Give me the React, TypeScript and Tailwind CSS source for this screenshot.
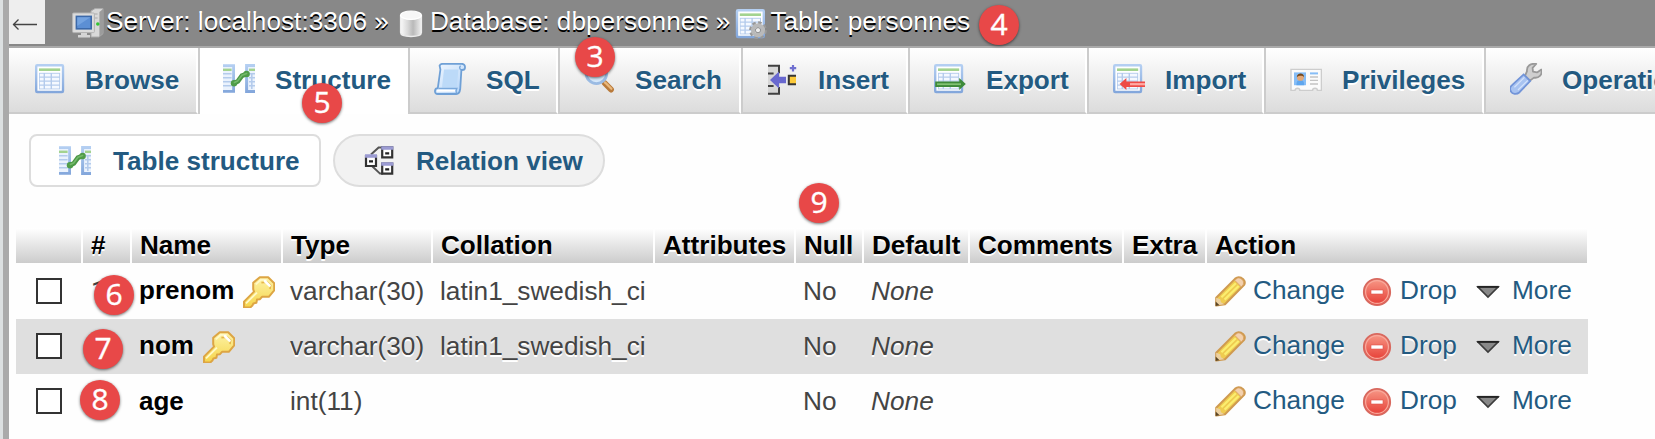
import type { ReactNode } from "react";

type IconProps = { className?: string };

function Svg({ className = "", children }: { className?: string; children: ReactNode }) {
  return (
    <svg viewBox="0 0 16 16" className={`size-8 shrink-0 ${className}`} fill="none">
      {children}
    </svg>
  );
}

function Defs() {
  return (
    <svg className="absolute size-0" aria-hidden="true">
      <defs>
        <linearGradient id="key" x1="0" y1="0" x2="0" y2="1">
          <stop offset="0" stopColor="#fdf3a8" />
          <stop offset="1" stopColor="#f6d54a" />
        </linearGradient>
        <linearGradient id="red" x1="0" y1="0" x2="0" y2="1">
          <stop offset="0" stopColor="#f79a88" />
          <stop offset="1" stopColor="#e63c34" />
        </linearGradient>
        <linearGradient id="cyl" x1="0" y1="0" x2="1" y2="0">
          <stop offset="0" stopColor="#fafafa" />
          <stop offset="0.35" stopColor="#d8d8d8" />
          <stop offset="0.6" stopColor="#b9b9b9" />
          <stop offset="1" stopColor="#f0f0f0" />
        </linearGradient>
        <linearGradient id="scroll" x1="0" y1="0" x2="1" y2="1">
          <stop offset="0" stopColor="#f2f8ff" />
          <stop offset="1" stopColor="#b2d3f7" />
        </linearGradient>
        <linearGradient id="frame" gradientUnits="userSpaceOnUse" x1="0" y1="1" x2="0" y2="15">
          <stop offset="0" stopColor="#b4cff2" />
          <stop offset="1" stopColor="#82a6db" />
        </linearGradient>
      </defs>
    </svg>
  );
}

function Sheet() {
  return (
    <>
      <rect x="1.6" y="1.100" width="13.400" height="13.400" rx="0.5" fill="#fff" stroke="url(#frame)" strokeWidth="1.200" />
      <rect x="3" y="2.700" width="10.600" height="1.300" fill="#a3d38f" />
      <rect x="3" y="4.900" width="10.600" height="8.300" fill="#b4cbec" />
      <path d="M3.400 5.400h1.900v1.300H3.400zM6 5.400h2.800v1.300H6zM9.500 5.400h3.600v1.300H9.500zM3.400 7.400h1.900v1.300H3.400zM6 7.400h2.800v1.300H6zM9.500 7.400h3.600v1.300H9.500zM3.400 9.400h1.900v1.300H3.400zM6 9.400h2.800v1.300H6zM9.500 9.400h3.600v1.300H9.500zM3.400 11.400h1.900v1.300H3.400zM6 11.400h2.800v1.300H6zM9.500 11.400h3.600v1.300H9.500z" fill="#f5f9ff" />
    </>
  );
}

function BrowseIcon({ className }: IconProps) {
  return <Svg className={className}><Sheet /></Svg>;
}

function StructureIcon({ className }: IconProps) {
  return (
    <Svg className={className}>
      <path d="M0 .8h5.600v13.800H0z" fill="#eaf2fd" />
      <path d="M0 1.300h5.300v12.900H0" stroke="url(#frame)" strokeWidth="1.400" />
      <path d="M0 3.400h4.300" stroke="#a3d38f" strokeWidth="1.200" />
      <path d="M0 5.400h4.300M0 7.400h4.300M0 9.400h4.300M0 11.400h4.300" stroke="#b4cbec" strokeWidth="0.800" />
      <path d="M16 .8h-4.600v13.800H16z" fill="#eaf2fd" />
      <path d="M16 1.300h-4.200v12.900H16" stroke="url(#frame)" strokeWidth="1.500" />
      <path d="M13 3.400h3" stroke="#a3d38f" strokeWidth="1.200" />
      <path d="M13 5.400h3M13 7.400h3M13 9.400h3M13 11.400h3M14.400 5v8" stroke="#b4cbec" strokeWidth="0.800" />
      <path d="M5.600 10.100 7.400 9.200 9.400 6.400 11.500 5.600" stroke="#4b9646" strokeWidth="2.400" strokeLinecap="round" strokeLinejoin="round" />
      <circle cx="5.500" cy="10.100" r="1.600" fill="#4f9c49" />
      <circle cx="11.800" cy="5.500" r="1.600" fill="#4f9c49" />
      <path d="M5.700 9.700 7.300 9 9.500 6.100 11.800 5.300" stroke="#73b96a" strokeWidth="0.800" strokeLinecap="round" />
    </Svg>
  );
}

function ScrollIcon({ className }: IconProps) {
  return (
    <Svg className={className}>
      <path d="M2.800 1.300c.3-.7.9-.9 1.600-.9h9.400c1.200 0 1.800.8 1.700 1.800 0 1-.7 1.300-1.500 1.300h-.3l-.6 9.600c-.2 1.600-.8 2.400-2 2.400H1.900C.9 15.500.4 14.800.5 13.900c.1-.9.700-1.300 1.400-1.300l1.300-9.300z" fill="url(#scroll)" stroke="#6fa0d6" strokeWidth="0.900" />
      <path d="M5 3.300 4 12.300h7.400l.8-9z" fill="#bcdaf8" />
      <path d="M2.400 12.700h9c-.5.800-.4 1.700-.2 2.500M13.500 3.400c-.9-.5-.8-1.500-.2-2" stroke="#7aa9dc" strokeWidth="0.700" />
      <path d="M1.500 13.900h9" stroke="#fff" strokeWidth="0.900" />
    </Svg>
  );
}

function SearchIcon({ className }: IconProps) {
  return (
    <Svg className={className}>
      <path d="m10.800 10 3.200 3.300" stroke="#b97a3a" strokeWidth="2.900" strokeLinecap="round" />
      <path d="m11 9.700 3.200 3.200" stroke="#e9b87c" strokeWidth="1.100" strokeLinecap="round" />
      <circle cx="6.700" cy="5.200" r="5.100" fill="#d7e9fb" stroke="#9bbbe3" strokeWidth="1.400" />
    </Svg>
  );
}

function InsertIcon({ className }: IconProps) {
  return (
    <Svg className={className}>
      <path d="M1 1h6v14.500H1z" fill="#cfcfcf" opacity=".75" />
      <path d="M1 1.400h5.500v3.700M1 5.300h2.800M1 11.500h2.800M6.500 12v3.400H1" stroke="#404040" strokeWidth="1" />
      <path d="M2 8.500 6.500 4.200v2.700H10v3.200H6.500v2.700z" fill="#6868cf" />
      <path d="M13.500 1v3.200M11.900 2.600h3.200" stroke="#7070d0" strokeWidth="1.100" />
      <path d="M15 6.400h-3.600v4.200H15" stroke="#353535" strokeWidth="1" fill="#fcca3a" />
    </Svg>
  );
}

function ExportIcon({ className }: IconProps) {
  return (
    <Svg className={className}>
      <g transform="translate(-1 0)"><Sheet /></g>
      <path d="M.6 9.200h12V7.500l3.300 3-3.300 3V12H.6z" fill="#3e8a3a" />
      <path d="M1.500 10.600h12" stroke="#82c274" strokeWidth="0.900" />
    </Svg>
  );
}

function ImportIcon({ className }: IconProps) {
  return (
    <Svg className={className}>
      <g transform="translate(-1 0)"><Sheet /></g>
      <path d="M16 9.200H6.700V7.500l-3.400 3 3.400 3V12H16z" fill="#ee4a46" />
      <path d="M8.500 10.600H16" stroke="#ffaaa4" strokeWidth="1.100" />
    </Svg>
  );
}

function PrivilegesIcon({ className }: IconProps) {
  return (
    <Svg className={className}>
      <path d="M.5 3.200h15.200v10.500h-2c0-1.400-2.400-1.400-2.400 0H4.900c0-1.400-2.400-1.400-2.400 0h-2z" fill="#fbfbfb" stroke="#cdcdcd" strokeWidth="0.700" />
      <rect x="2" y="4.700" width="6" height="6.400" fill="#86bdf6" />
      <path d="M3.200 11.100c0-2.300 1-2.600 1.900-2.600s2 .3 2 2.600z" fill="#5fa6ee" />
      <circle cx="5.200" cy="7.200" r="1.700" fill="#e3a878" />
      <path d="M3.400 7.100c0-2.400 3.800-2.400 3.600 0-.6-.8-2.300-1-3.600 0z" fill="#74491f" />
      <path d="M10 5.200h4" stroke="#86bdf6" strokeWidth="1" />
      <path d="M10 7h4M10 8.700h4M10 10.500h4" stroke="#c4c4c4" strokeWidth="0.700" />
    </Svg>
  );
}

function WrenchIcon({ className }: IconProps) {
  return (
    <Svg className={className}>
      <path d="M13.100.5c-2.800-.5-4.900 1-4.600 3.600L7.500 6.400l2.500 2.400 2-1.500c2.400.4 4.300-1.300 3.700-4L13.500 4.700l-2-.4-.2-1.900z" fill="#cfcfcf" stroke="#999" strokeWidth="0.900" strokeLinejoin="round" />
      <path d="M6.800 5.700 10.100 9 4.800 14.600c-1.600 1.400-3.700.9-4.300-.3-.7-1.100-.4-2.400.4-3.100z" fill="#a8c3f1" stroke="#7294d8" strokeWidth="0.900" />
      <path d="M2.200 12.100 7.200 7.200M4 13.500 8.900 8.700" stroke="#d4e2fb" strokeWidth="0.600" />
    </Svg>
  );
}

function RelationIcon({ className }: IconProps) {
  return (
    <Svg className={className}>
      <path d="M4 4.800 7.800 1.200h2M4.500 10.500l4 3.800H10" stroke="#555" strokeWidth="1" />
      <path d="M1.500 5.500h5v5h-5zM9.600 1.200h5v5h-5zM9.600 9.300h5v5h-5z" fill="#fff" stroke="#333" strokeWidth="1.100" />
      <path d="M1 4.600h6v1.800H1zM9.100.6h6.100v1.800H9.100zM9.100 8.600h6.100v1.800H9.100z" fill="#9b9bd2" />
      <path d="M3 8.200h2M11.100 4.200h2M11.100 12.200h2" stroke="#222" strokeWidth="1.200" />
    </Svg>
  );
}

function ServerIcon({ className }: IconProps) {
  return (
    <Svg className={className}>
      <path d="m9.500 1.500 2-1.200h4v12.500l-2 1.700H9.500z" fill="#d9d9d9" stroke="#aaa" strokeWidth="0.500" />
      <path d="M13.700 2v12.200l1.800-1.500V.5z" fill="#9c9c9c" />
      <path d="M10.300 3h2.500M10.300 5h2.500" stroke="#aaa" strokeWidth="0.600" />
      <rect x=".3" y="2.500" width="10.900" height="9.800" rx=".5" fill="#dcdcdc" stroke="#b5b5b5" strokeWidth="0.500" />
      <rect x="2.200" y="4.200" width="7.400" height="6.200" fill="#5c8fd4" stroke="#3c69a9" strokeWidth="0.800" />
      <path d="M2.600 4.600h6.600L2.600 9z" fill="#84b0e8" opacity=".6" />
      <circle cx="12.900" cy="8" r="0.900" fill="#35c435" />
      <path d="M4.500 12.500h3v1H9v1.300H3v-1.300h1.500z" fill="#d5d5d5" />
    </Svg>
  );
}

function DatabaseIcon({ className }: IconProps) {
  return (
    <Svg className={className}>
      <path d="M2.800 3.800v8.500c0 2.600 10.400 2.600 10.400 0V3.800z" fill="url(#cyl)" stroke="#ededed" strokeWidth="0.700" />
      <ellipse cx="8" cy="3.600" rx="5.200" ry="2.100" fill="#f7f7f7" stroke="#fff" strokeWidth="0.600" />
    </Svg>
  );
}

function TableIcon({ className }: IconProps) {
  return (
    <Svg className={className}>
      <g transform="translate(-.6 0)"><Sheet /></g>
      <circle cx="11.500" cy="11.100" r="3.700" stroke="#999" strokeWidth="1.500" strokeDasharray="1.700 1.200" />
      <circle cx="11.500" cy="11.100" r="2.500" stroke="#b9b9b9" strokeWidth="2" />
      <circle cx="11.500" cy="11.100" r="1.300" fill="#eee" stroke="#888" strokeWidth="0.500" />
    </Svg>
  );
}

function KeyIcon({ className }: IconProps) {
  return (
    <Svg className={className}>
      <path d="M8.400.6h4.200l3 3v3.600l-2.700 3.200H9.500l-1 1.200-1.500.2-.3 1.600-1.500.3-.5 1.100-1 .9H.5v-2.900l5-5-.4-1.200V3.400z" fill="url(#key)" stroke="#dda544" strokeWidth="1" strokeLinejoin="round" />
      <path d="M1.500 13.700 7 8.300M6.400 4.200l2.500-2.300h3" stroke="#fff9c8" strokeWidth="0.900" />
      <path d="m9.200 3.300 3-.2 1.600 1.500-.3 2" stroke="#e6b64c" strokeWidth="0.800" />
      <path d="m11 2.600 2.300 2.200" stroke="#fff" strokeWidth="1.300" strokeLinecap="round" />
    </Svg>
  );
}

function PencilIcon({ className }: IconProps) {
  return (
    <Svg className={className}>
      <path d="M1.100 10.900 10.600 1.300c1-.8 2-.8 3-.4 1.600.8 2.200 2.200 1.500 3.500L5.500 14.100l-4.400.7z" fill="#efcb50" stroke="#cf9a50" strokeWidth="1" strokeLinejoin="round" />
      <path d="M3.700 10.600 10.900 3.600M5.300 11.800 12.300 5" stroke="#fbee70" strokeWidth="1.100" />
      <path d="m10.300 2.100 1.400-1c1.600-.7 3.500 1.200 3 3l-1 1.400z" fill="#f3d1ae" stroke="#d79d62" strokeWidth="0.400" />
      <path d="m1.100 10.900 2 .7.400 1.500 1.700 1-4.100.7z" fill="#ecd0a0" />
      <path d="m.8 12.700 2 1.900-2 .4z" fill="#5b4626" />
    </Svg>
  );
}

function DropIcon({ className }: IconProps) {
  return (
    <Svg className={className}>
      <circle cx="8" cy="8" r="6.600" fill="url(#red)" stroke="#d8695f" strokeWidth="0.900" />
      <circle cx="8" cy="8" r="5.700" stroke="#f8a99c" strokeWidth="0.600" />
      <rect x="5" y="7" width="6" height="2" fill="#fff" stroke="#df5047" strokeWidth="0.300" />
    </Svg>
  );
}

function MoreIcon({ className }: IconProps) {
  return (
    <Svg className={className}>
      <path d="M3 5.500h10L8 10.500z" fill="#888" stroke="#3c3c3c" strokeWidth="0.800" />
      <path d="M2.600 5.400h10.800" stroke="#222" strokeWidth="0.900" />
    </Svg>
  );
}

const tabBase =
  "flex h-[66px] shrink-0 items-start pt-[15px] border-b-2 border-b-[#ccc] border-r-2 border-r-white bg-linear-to-b from-white to-[#dcdcdc]";

const tabs = [
  { label: "Browse", Icon: BrowseIcon, box: `${tabBase} w-[189px] pl-6` },
  {
    label: "Structure",
    Icon: StructureIcon,
    box: "flex h-[66px] w-[210px] shrink-0 items-start border-l-2 border-l-[#ccc] bg-white pl-[23px] pt-[15px]",
  },
  { label: "SQL", Icon: ScrollIcon, box: `${tabBase} w-[150px] border-l-2 border-l-[#ccc] pl-6` },
  { label: "Search", Icon: SearchIcon, box: `${tabBase} w-[183px] border-l-2 border-l-[#ccc] pl-[23px]` },
  { label: "Insert", Icon: InsertIcon, box: `${tabBase} w-[167px] border-l-2 border-l-[#ccc] pl-[23px]` },
  { label: "Export", Icon: ExportIcon, box: `${tabBase} w-[179px] border-l-2 border-l-[#ccc] pl-6` },
  { label: "Import", Icon: ImportIcon, box: `${tabBase} w-[177px] border-l-2 border-l-[#ccc] pl-6` },
  { label: "Privileges", Icon: PrivilegesIcon, box: `${tabBase} w-[220px] border-l-2 border-l-[#ccc] pl-6` },
  { label: "Operations", Icon: WrenchIcon, box: `${tabBase} w-[240px] border-l-2 border-l-[#ccc] pl-6` },
];

const headers = ["", "#", "Name", "Type", "Collation", "Attributes", "Null", "Default", "Comments", "Extra", "Action"];

const columns =
  "grid grid-cols-[65px_47px_149px_148px_220px_139px_66px_104px_152px_81px_380px] gap-x-[2px]";

const rows = [
  { num: "1", name: "prenom", key: true, type: "varchar(30)", collation: "latin1_swedish_ci" },
  { num: "", name: "nom", key: true, type: "varchar(30)", collation: "latin1_swedish_ci" },
  { num: "", name: "age", key: false, type: "int(11)", collation: "" },
];

const badges = [
  { n: 3, place: "left-[575px] top-[37px]" },
  { n: 4, place: "left-[979px] top-[5px]" },
  { n: 5, place: "left-[302px] top-[83px]" },
  { n: 6, place: "left-[94px] top-[275px]" },
  { n: 7, place: "left-[83px] top-[329px]" },
  { n: 8, place: "left-[80px] top-[380px]" },
  { n: 9, place: "left-[799px] top-[183px]" },
];

export default function App() {
  return (
    <div className="relative flex h-[439px] w-[1655px] overflow-hidden bg-[#fefefe] font-['Liberation_Sans',Arial,sans-serif] text-[26.24px] leading-[30px] whitespace-nowrap">
      <Defs />
      <div className="w-[3px] shrink-0 bg-[#dce0e1]" />
      <div className="w-[6px] shrink-0 bg-[#aaa]" />
      <div className="flex min-w-0 flex-1 flex-col">
        <header className="flex h-12 shrink-0 items-start border-b-2 border-[#aaa] bg-[#888] text-white [text-shadow:0_2px_0_#000]">
          <div className="h-11 w-9 shrink-0 bg-[#eee]">
            <svg viewBox="0 0 36 44" className="h-11 w-9" fill="none" stroke="#444" strokeWidth="1.3">
              <path d="M4 24.500h24M9.500 19.500l-5 5 5 5" />
            </svg>
          </div>
          <ServerIcon className="mt-2 ml-[27px]" />
          <span className="mt-[6px] ml-[2px]">Server: localhost:3306 »</span>
          <DatabaseIcon className="mt-2 ml-[6px]" />
          <span className="mt-[6px] ml-[3px]">Database: dbpersonnes »</span>
          <TableIcon className="mt-2 ml-[5px]" />
          <span className="mt-[6px] ml-[3px]">Table: personnes</span>
        </header>

        <nav className="flex shrink-0 overflow-hidden text-[26.1px] font-bold text-[#235a81] [text-shadow:0_2px_0_#fff]">
          {tabs.map(({ label, Icon, box }) => (
            <a key={label} className={box}>
              <Icon />
              <span className="ml-5 mt-[2px]">{label}</span>
            </a>
          ))}
        </nav>

        <div className="mt-5 ml-[20px] flex h-[53px] shrink-0 gap-3 text-[26.1px] font-bold text-[#235a81]">
          <a className="flex w-[292px] items-start rounded-lg border-2 border-[#ddd] bg-white pt-[9px] pl-[28px]">
            <StructureIcon />
            <span className="mt-px ml-[22px]">Table structure</span>
          </a>
          <a className="flex w-[272px] items-start rounded-full border-2 border-[#ddd] bg-[#f2f2f2] pt-[9px] pl-[28px]">
            <RelationIcon />
            <span className="mt-px ml-[21px]">Relation view</span>
          </a>
        </div>

        <div className="mt-[41px] ml-[7px] flex w-[1572px] flex-col text-[#444] [text-shadow:0_2px_0_#fff]">
          <div className={`${columns} h-[35px] text-[26.1px] font-bold text-black`}>
            {headers.map((h, i) => (
              <div key={i} className="h-[35px] bg-linear-to-b from-white to-[#ccc] pt-[2px] pl-[8px]">
                {h}
              </div>
            ))}
          </div>
          <div className="mt-[1px] flex flex-col">
            {rows.map((r, i) => (
              <div key={r.name} className={`${columns} h-[55px] ${i === 1 ? "bg-[#dfdfdf]" : ""}`}>
                <div className="pt-[14px] pl-5">
                  <div className="size-[26px] border-2 border-[#333] bg-white" />
                </div>
                <div className="pt-[12px] pl-[8px] font-['Roboto',sans-serif]">{r.num}</div>
                <div className="flex pl-[7px] font-bold text-black">
                  <span className={`text-[26px] ${r.key ? "mt-[11px]" : "mt-[12px]"}`}>{r.name}</span>
                  {r.key && <KeyIcon className="mt-[12px] ml-[9px]" />}
                </div>
                <div className="pt-[12px] pl-[7px]">{r.type}</div>
                <div className="pt-[12px] pl-[7px]">{r.collation}</div>
                <div />
                <div className="pt-[12px] pl-[7px]">No</div>
                <div className="pt-[12px] pl-[7px] italic">None</div>
                <div />
                <div />
                <div className="flex pt-[11px] pl-[7px] text-[#235a81]">
                  <PencilIcon className="mt-[1px]" />
                  <span className="ml-[7px] w-[108px]">Change</span>
                  <DropIcon className="mt-[1px]" />
                  <span className="ml-[7px] w-[72px]">Drop</span>
                  <MoreIcon className="mt-px" />
                  <span className="ml-[8px]">More</span>
                </div>
              </div>
            ))}
          </div>
        </div>
      </div>

      {badges.map(({ n, place }) => (
        <div
          key={n}
          className={`absolute flex size-10 items-center justify-center rounded-full bg-[#e84848] pb-[2px] font-['Open_Sans','Noto_Sans',sans-serif] text-[30px] text-white shadow-[0_1px_3px_rgba(0,0,0,0.55)] [-webkit-text-stroke:0.4px_white] ${place}`}
        >
          {n}
        </div>
      ))}
    </div>
  );
}
